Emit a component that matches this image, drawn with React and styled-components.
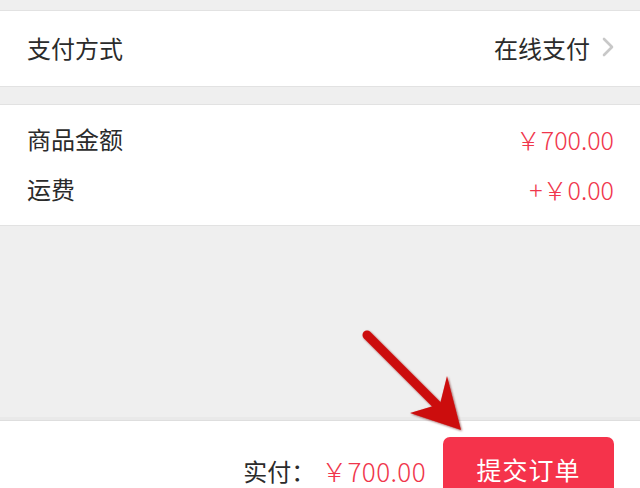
import React from "react";
import styled, { createGlobalStyle } from "styled-components";

const Global = createGlobalStyle`
  html, body { margin: 0; padding: 0; }
  body {
    background: #efefef;
    font-family: "Noto Sans CJK SC", "Noto Sans", sans-serif;
    color: #333;
  }
  * { box-sizing: border-box; }
`;

const Page = styled.div`
  position: relative;
  width: 640px;
  height: 488px;
  overflow: hidden;
  display: flex;
  flex-direction: column;
  background: #efefef;
`;

const Section = styled.div`
  background: #fff;
  border-top: 1px solid #e2e2e2;
  border-bottom: 1px solid #e2e2e2;
  margin-top: ${(p) => p.$gap}px;
  padding: ${(p) => p.$pad || 0}px 0;
`;

const Row = styled.div`
  height: ${(p) => p.$h}px;
  display: flex;
  align-items: center;
  justify-content: space-between;
  padding: 0 26px 3px 27px;
  font-size: 24px;
`;

const Label = styled.span`
  color: #2b2b2b;
`;

const Value = styled.span`
  display: flex;
  align-items: center;
  gap: 12px;
  color: ${(p) => (p.$red ? "#f0364c" : "#2b2b2b")};
  font-weight: ${(p) => (p.$red ? 300 : 400)};
  font-size: ${(p) => (p.$red ? 25 : 24)}px;
`;

const Filler = styled.div`
  flex: 1;
`;

const Footer = styled.div`
  height: 68px;
  flex-shrink: 0;
  background: #fff;
  border-top: 1px solid #dedede;
  box-shadow: 0 -3px 0 #e9e9e9;
  display: flex;
  justify-content: flex-end;
  align-items: flex-start;
  padding: 16px 26px 0 0;
  gap: 17px;
`;

const Total = styled.div`
  height: 66px;
  display: flex;
  align-items: center;
  font-size: 24px;
  color: #2b2b2b;
`;

const Price = styled.span`
  color: #f0364c;
  font-weight: 300;
  font-size: 26px;
  letter-spacing: 0.4px;
  margin-left: 6px;
`;

const SubmitButton = styled.button`
  width: 171px;
  height: 66px;
  flex-shrink: 0;
  border: none;
  border-radius: 7px;
  background: #f5334b;
  color: #fff;
  font-family: inherit;
  font-size: 25px;
  letter-spacing: 1px;
  padding: 0 0 2px;
`;

const ArrowLayer = styled.svg`
  position: absolute;
  left: 0;
  top: 0;
  pointer-events: none;
`;

const Chevron = () => (
  <svg width="12" height="20" viewBox="0 0 12 20">
    <path d="M2 2 L10 10 L2 18" fill="none" stroke="#c8c8c8" strokeWidth="2.6" strokeLinecap="round" strokeLinejoin="round" />
  </svg>
);

export default function App() {
  return (
    <Page>
      <Global />
      <Section $gap={10}>
        <Row $h={75}>
          <Label>支付方式</Label>
          <Value>
            在线支付
            <Chevron />
          </Value>
        </Row>
      </Section>
      <Section $gap={17} $pad={10}>
        <Row $h={50}>
          <Label>商品金额</Label>
          <Value $red>￥700.00</Value>
        </Row>
        <Row $h={50}>
          <Label>运费</Label>
          <Value $red>+￥0.00</Value>
        </Row>
      </Section>
      <Filler />
      <Footer>
        <Total>
          实付：<Price>￥700.00</Price>
        </Total>
        <SubmitButton>提交订单</SubmitButton>
      </Footer>
      <ArrowLayer width="640" height="488" viewBox="0 0 640 488">
        <defs>
          <filter id="sh" x="-20%" y="-20%" width="140%" height="140%">
            <feDropShadow dx="1" dy="1" stdDeviation="1.2" floodColor="#600000" floodOpacity="0.6" />
          </filter>
        </defs>
        <g filter="url(#sh)">
          <line x1="367" y1="335" x2="440" y2="408" stroke="#cc0a0a" strokeWidth="9" strokeLinecap="round" />
          <polygon points="461,430 447,376 440,404 410,413" fill="#cc0a0a" />
        </g>
      </ArrowLayer>
    </Page>
  );
}
